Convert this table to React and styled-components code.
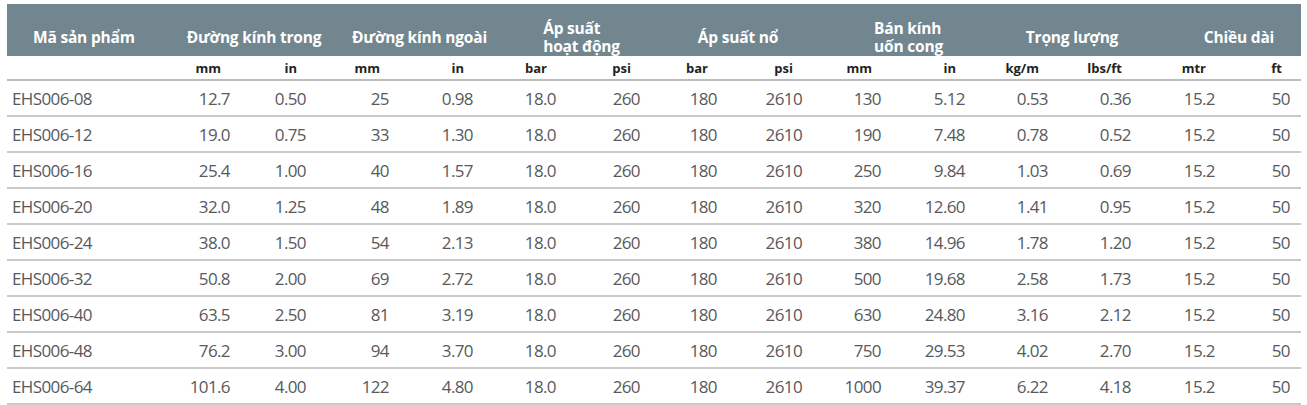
import React from "react";
import styled, { createGlobalStyle } from "styled-components";

const GlobalStyle = createGlobalStyle`
  body {
    margin: 0;
    background: #ffffff;
    font-family: "Open Sans", "Noto Sans", sans-serif;
  }
`;

const COLS = "153px 76px 76px 83px 84px 83px 84px 77px 85px 79px 84px 83px 83px 84px 80px";

const groups = [
  { label: ["Đường kính trong"], shift: 18 },
  { label: ["Đường kính ngoài"], shift: 24 },
  { label: ["Áp suất", "hoạt động"], shift: 19 },
  { label: ["Áp suất nổ"], shift: 11 },
  { label: ["Bán kính", "uốn cong"], shift: 19 },
  { label: ["Trọng lượng"], shift: 18 },
  { label: ["Chiều dài"], shift: 20 },
];

const units = ["mm", "in", "mm", "in", "bar", "psi", "bar", "psi", "mm", "in", "kg/m", "lbs/ft", "mtr", "ft"];

const rows = [
  ["EHS006-08", "12.7", "0.50", "25", "0.98", "18.0", "260", "180", "2610", "130", "5.12", "0.53", "0.36", "15.2", "50"],
  ["EHS006-12", "19.0", "0.75", "33", "1.30", "18.0", "260", "180", "2610", "190", "7.48", "0.78", "0.52", "15.2", "50"],
  ["EHS006-16", "25.4", "1.00", "40", "1.57", "18.0", "260", "180", "2610", "250", "9.84", "1.03", "0.69", "15.2", "50"],
  ["EHS006-20", "32.0", "1.25", "48", "1.89", "18.0", "260", "180", "2610", "320", "12.60", "1.41", "0.95", "15.2", "50"],
  ["EHS006-24", "38.0", "1.50", "54", "2.13", "18.0", "260", "180", "2610", "380", "14.96", "1.78", "1.20", "15.2", "50"],
  ["EHS006-32", "50.8", "2.00", "69", "2.72", "18.0", "260", "180", "2610", "500", "19.68", "2.58", "1.73", "15.2", "50"],
  ["EHS006-40", "63.5", "2.50", "81", "3.19", "18.0", "260", "180", "2610", "630", "24.80", "3.16", "2.12", "15.2", "50"],
  ["EHS006-48", "76.2", "3.00", "94", "3.70", "18.0", "260", "180", "2610", "750", "29.53", "4.02", "2.70", "15.2", "50"],
  ["EHS006-64", "101.6", "4.00", "122", "4.80", "18.0", "260", "180", "2610", "1000", "39.37", "6.22", "4.18", "15.2", "50"],
];

const Page = styled.div`
  padding: 4px 0 0 7px;
`;

const Table = styled.div`
  width: 1294px;
`;

const HeadRow = styled.div`
  display: grid;
  grid-template-columns: ${COLS};
  height: 52px;
  padding-top: 13px;
  box-sizing: border-box;
  background: #72868f;
  color: #ffffff;
  font-weight: 700;
  font-size: 15.5px;
  letter-spacing: -0.2px;
`;

const HeadCell = styled.div`
  display: flex;
  align-items: center;
  justify-content: ${(p) => (p.$first ? "flex-start" : "center")};
  grid-column: ${(p) => (p.$first ? "span 1" : "span 2")};
  padding-left: ${(p) => (p.$first ? 26 : p.$shift * 2)}px;
  white-space: nowrap;
`;

const HeadLabel = styled.span`
  display: inline-block;
  text-align: left;
  line-height: 18px;
`;

const UnitRow = styled.div`
  display: grid;
  grid-template-columns: ${COLS};
  height: 25px;
  box-sizing: border-box;
  border-bottom: 2px solid #bdbdbd;
  font-weight: 700;
  font-size: 13px;
  color: #231f20;
`;

const UnitCell = styled.div`
  display: flex;
  align-items: center;
  justify-content: flex-end;
  padding-top: 1px;
  padding-right: ${(p) => (p.$last ? 19 : 15)}px;
`;

const DataRow = styled.div`
  display: grid;
  grid-template-columns: ${COLS};
  height: 36px;
  box-sizing: border-box;
  border-bottom: 2px solid #c9c9c9;
  font-size: 17px;
  letter-spacing: -0.6px;
  color: #58595b;
`;

const DataCell = styled.div`
  display: flex;
  align-items: center;
  justify-content: ${(p) => (p.$first ? "flex-start" : "flex-end")};
  padding-left: ${(p) => (p.$first ? 5 : 0)}px;
  padding-right: ${(p) => (p.$first ? 0 : p.$last ? 11 : 6)}px;
  padding-top: 1px;
`;

export default function App() {
  return (
    <>
      <GlobalStyle />
      <Page>
        <Table>
          <HeadRow>
            <HeadCell $first>Mã sản phẩm</HeadCell>
            {groups.map((g) => (
              <HeadCell key={g.label.join(" ")} $shift={g.shift}>
                <HeadLabel>
                  {g.label.map((line, i) => (
                    <React.Fragment key={line}>
                      {i > 0 && <br />}
                      {line}
                    </React.Fragment>
                  ))}
                </HeadLabel>
              </HeadCell>
            ))}
          </HeadRow>
          <UnitRow>
            <UnitCell />
            {units.map((u, i) => (
              <UnitCell key={i} $last={i === units.length - 1}>
                {u}
              </UnitCell>
            ))}
          </UnitRow>
          {rows.map((r) => (
            <DataRow key={r[0]}>
              {r.map((v, i) => (
                <DataCell key={i} $first={i === 0} $last={i === r.length - 1}>
                  {v}
                </DataCell>
              ))}
            </DataRow>
          ))}
        </Table>
      </Page>
    </>
  );
}
